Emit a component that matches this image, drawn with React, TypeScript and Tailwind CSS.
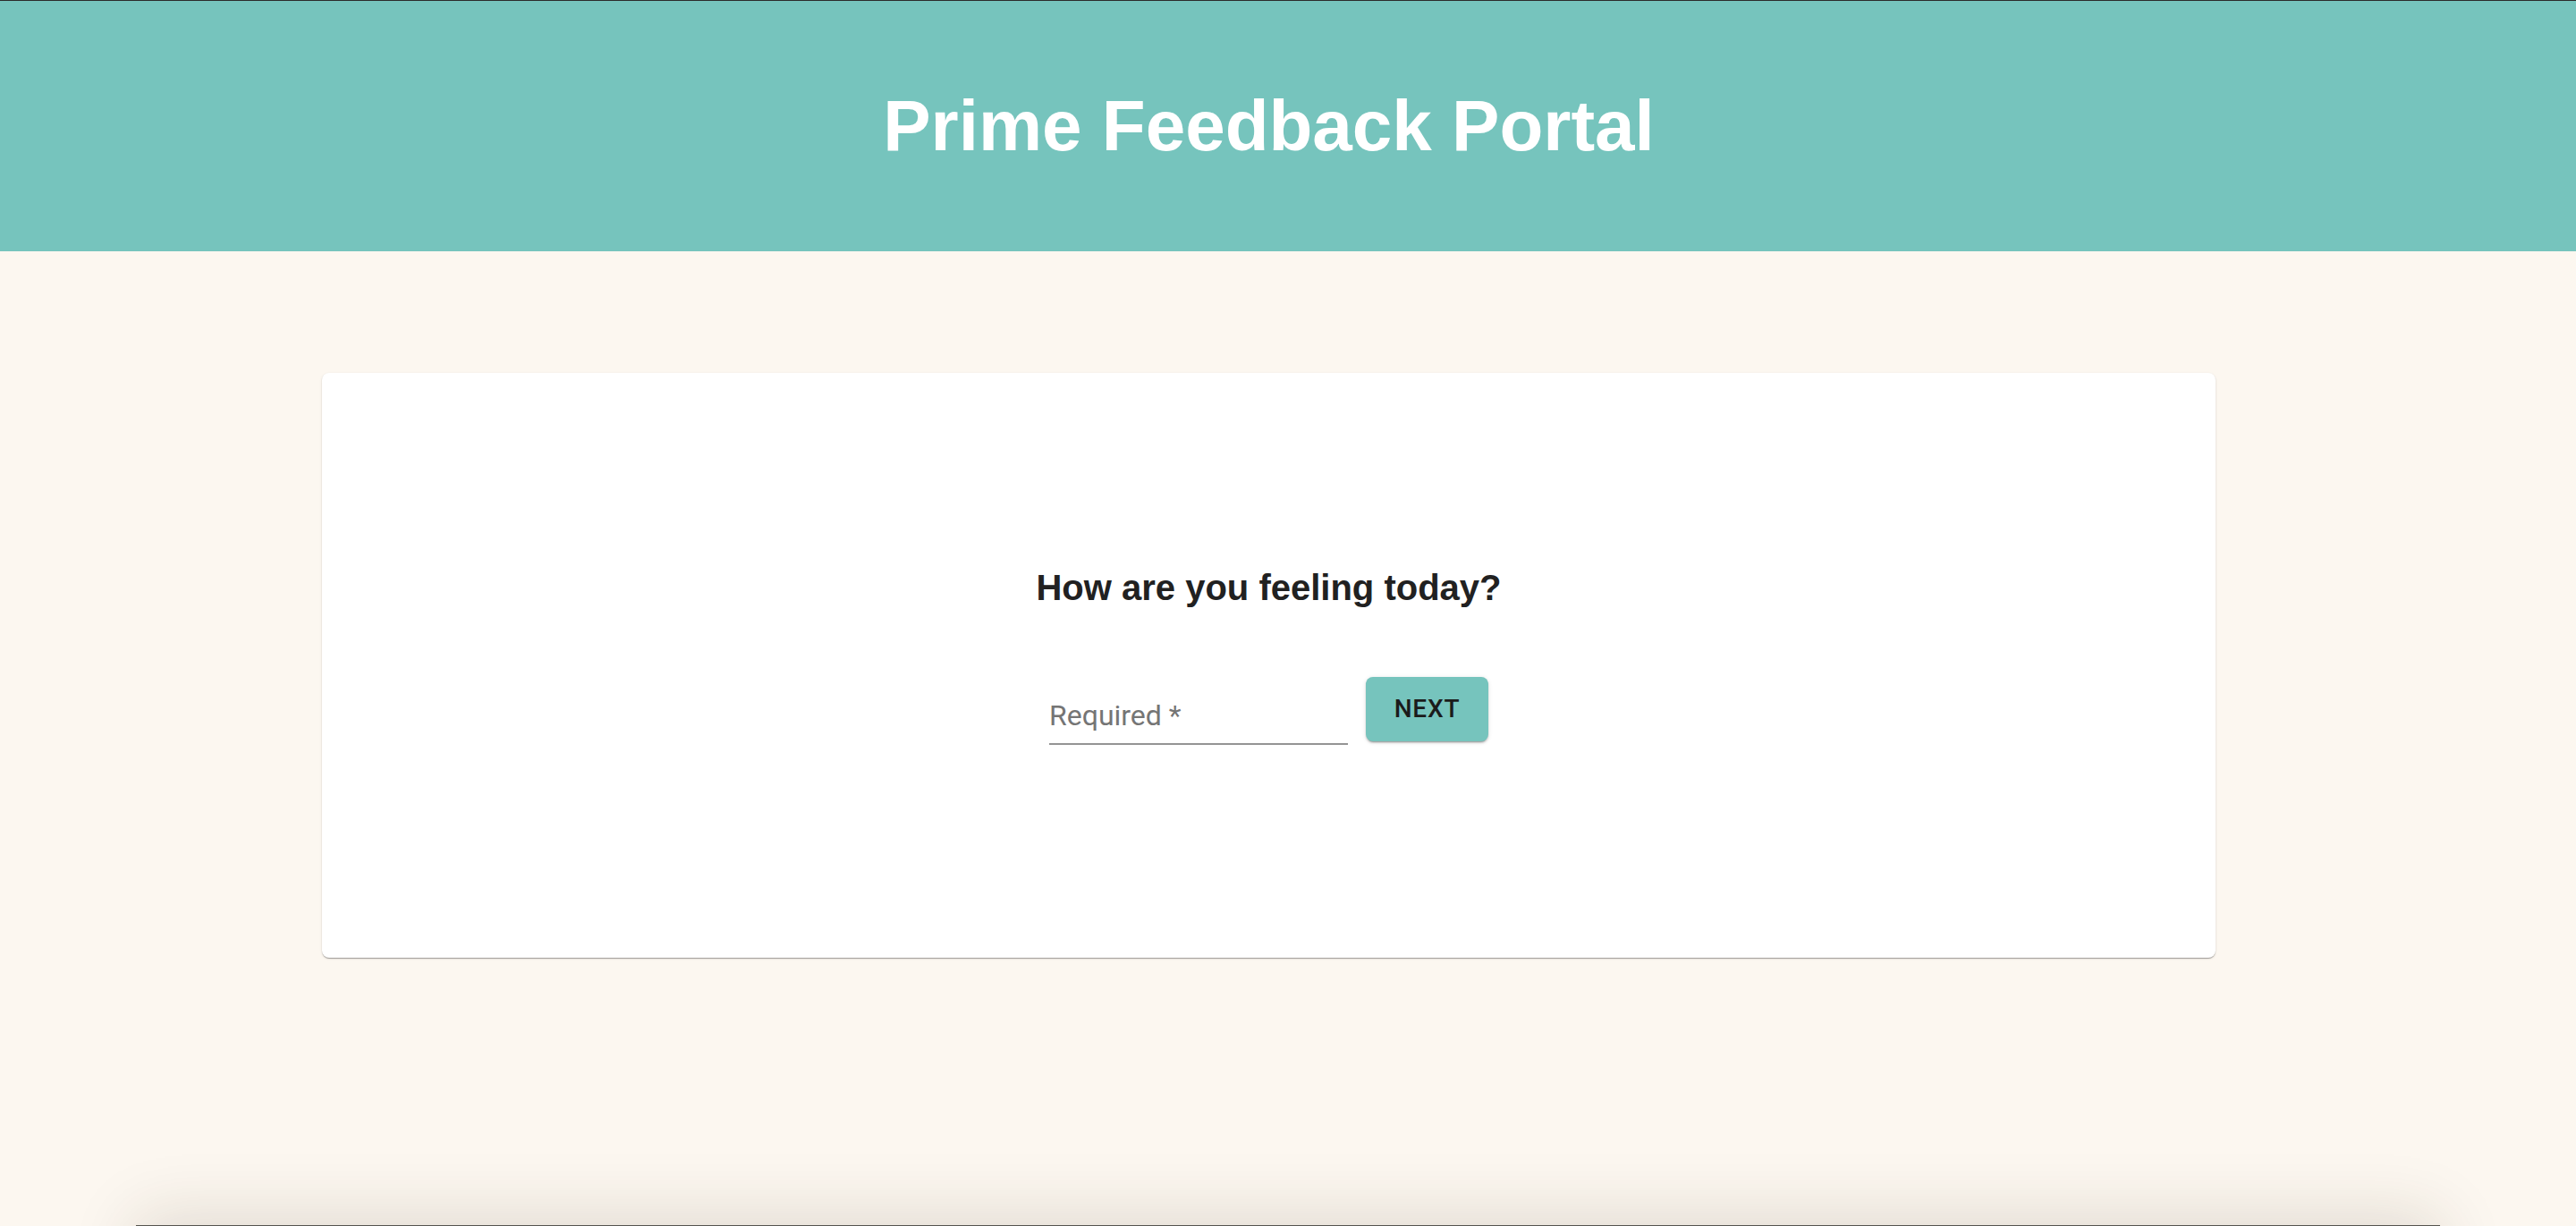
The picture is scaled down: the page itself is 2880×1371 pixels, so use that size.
import * as React from "react"

// single question step of the feedback flow
function QuestionCard() {
  const [answer, setAnswer] = React.useState("")

  return (
    <div className="w-full h-[654px] bg-white rounded-[8px] shadow-[0_2px_1px_-1px_rgba(0,0,0,0.2),0_1px_1px_0_rgba(0,0,0,0.14),0_1px_3px_0_rgba(0,0,0,0.12)] pt-[217px] flex flex-col items-center">
      <h2 className="font-['Liberation_Sans',Arial,sans-serif] font-bold text-[40px] leading-[46px] text-[#212121] m-0">
        How are you feeling today?
      </h2>

      <div className="mt-[77px] flex items-start gap-[20px]">
        <div className="w-[334px] pt-[24px] pb-[12px] border-b-2 border-[#949494]">
          <input
            type="text"
            value={answer}
            onChange={(e) => setAnswer(e.target.value)}
            placeholder="Required *"
            className="block w-full h-[38px] leading-[38px] p-0 bg-transparent outline-none font-['Roboto',sans-serif] text-[32px] text-[#212121] placeholder:text-[#757575]"
          />
        </div>
        <button
          type="button"
          className="w-[137px] h-[72px] rounded-[8px] bg-[#76c4bd] font-['Roboto',sans-serif] font-medium text-[28px] tracking-[0.8px] text-[#1b1b1b] shadow-[0_3px_1px_-2px_rgba(0,0,0,0.2),0_2px_2px_0_rgba(0,0,0,0.14),0_1px_5px_0_rgba(0,0,0,0.12)]"
        >
          NEXT
        </button>
      </div>
    </div>
  )
}

export default function App() {
  return (
    <div className="min-h-screen bg-[#fcf7f0] overflow-hidden">
      <header className="h-[281px] bg-[#76c4bd] border-t border-[#2b2b2b] flex items-center justify-center">
        <h1 className="mr-[43px] font-['Liberation_Sans',Arial,sans-serif] font-bold text-[80px] text-white m-0">
          Prime Feedback Portal
        </h1>
      </header>

      <main className="pt-[136px] pl-[360px] pr-[403px]">
        <QuestionCard />
      </main>

      {/* next section peeking in at the bottom */}
      <div className="mt-[299px] mx-auto w-[2576px] h-[400px] bg-[#fcf7f0] border-t border-[#55544f] shadow-[0_-10px_70px_rgba(60,40,20,0.14)]" />
    </div>
  )
}
